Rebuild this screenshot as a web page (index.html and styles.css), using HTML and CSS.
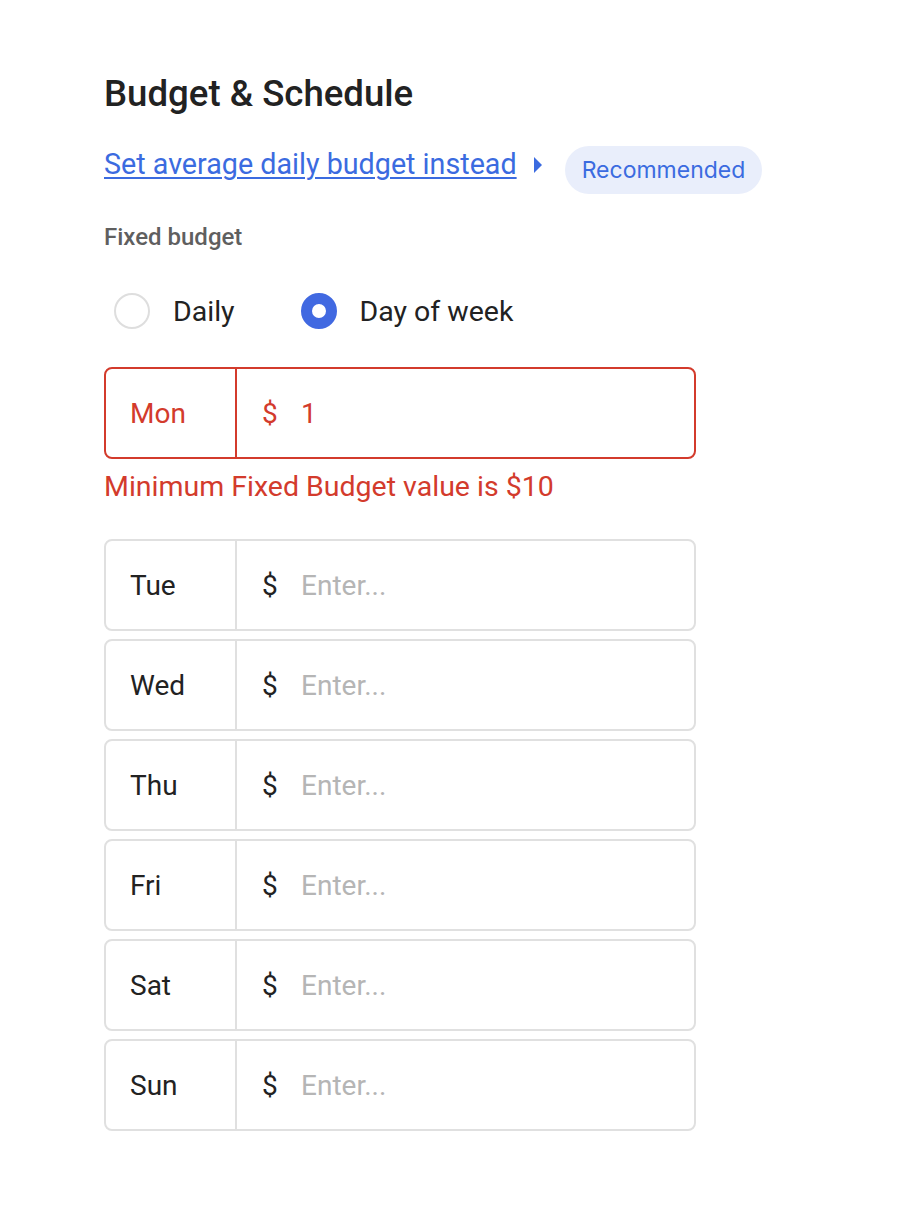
FILE: index.html
```html
<!DOCTYPE html>
<html lang="en">
<head>
<meta charset="utf-8">
<link rel="stylesheet" href="styles.css">
</head>
<body>
<main class="panel">
  <h1 class="title">Budget &amp; Schedule</h1>
  <div class="link-row">
    <a class="link" href="#">Set average daily budget instead</a>
    <span class="caret"></span>
    <span class="chip">Recommended</span>
  </div>
  <div class="label">Fixed budget</div>
  <div class="radios">
    <label class="radio"><span class="dot"></span><span>Daily</span></label>
    <label class="radio"><span class="dot on"></span><span>Day of week</span></label>
  </div>
  <div class="row error">
    <div class="day">Mon</div>
    <div class="amount"><span class="cur">$</span><span class="val">1</span></div>
  </div>
  <div class="err-msg">Minimum Fixed Budget value is $10</div>
  <div class="rows">
    <div class="row"><div class="day">Tue</div><div class="amount"><span class="cur">$</span><span class="ph">Enter...</span></div></div>
    <div class="row"><div class="day">Wed</div><div class="amount"><span class="cur">$</span><span class="ph">Enter...</span></div></div>
    <div class="row"><div class="day">Thu</div><div class="amount"><span class="cur">$</span><span class="ph">Enter...</span></div></div>
    <div class="row"><div class="day">Fri</div><div class="amount"><span class="cur">$</span><span class="ph">Enter...</span></div></div>
    <div class="row"><div class="day">Sat</div><div class="amount"><span class="cur">$</span><span class="ph">Enter...</span></div></div>
    <div class="row"><div class="day">Sun</div><div class="amount"><span class="cur">$</span><span class="ph">Enter...</span></div></div>
  </div>
</main>
</body>
</html>
```

FILE: styles.css
```css
* { box-sizing: border-box; }
html, body { margin: 0; padding: 0; background: #fff; }
body { font-family: Roboto, "Liberation Sans", sans-serif; color: #222; }
.panel { width: 592px; margin-left: 104px; padding-top: 72px; }
.title { margin: 0; font-size: 36.6px; line-height: 44px; font-weight: 500; color: #222; }
.link-row { display: flex; align-items: center; margin-top: 30px; height: 48px; white-space: nowrap; width: 720px; }
.link { font-size: 28.7px; color: #3b6be0; text-decoration: underline; text-underline-offset: 3px; text-decoration-thickness: 2px; line-height: 34px; flex: none; margin-bottom: 12px; }
.caret { flex: none; width: 0; height: 0; border-top: 8px solid transparent; border-bottom: 8px solid transparent; border-left: 8px solid #3b6be0; margin-left: 17px; margin-bottom: 10px; }
.chip { flex: none; margin-left: 23px; height: 48px; padding: 0 17px; border-radius: 24px; background: #e9eefb; color: #3b6be0; font-family: Inter, Roboto, sans-serif; font-size: 23px; display: flex; align-items: center; }
.label { margin-top: 28px; font-size: 24px; font-weight: 500; color: #5f5f5f; line-height: 30px; }
.radios { display: flex; gap: 66px; margin-top: 35px; padding-left: 10px; height: 48px; align-items: center; }
.radio { display: flex; align-items: center; gap: 23px; font-size: 28.5px; color: #222; }
.dot { width: 36px; height: 36px; border-radius: 50%; border: 2px solid #dedede; background: #fff; }
.dot.on { border: 11px solid #4169e1; }
.row { display: flex; height: 92px; border: 2px solid #e0e0e0; border-radius: 8px; font-size: 28px; }
.row.error { margin-top: 32px; border-color: #d33b2c; color: #d33b2c; }
.day { width: 131px; border-right: 2px solid #e0e0e0; display: flex; align-items: center; padding-left: 24px; }
.row.error .day { border-right-color: #d33b2c; }
.amount { flex: 1; display: flex; align-items: center; padding-left: 25px; }
.cur { width: 39px; }
.ph { color: #b5b5b5; }
.err-msg { color: #d33b2c; font-size: 28.5px; line-height: 40px; margin-top: 8px; }
.rows { display: flex; flex-direction: column; gap: 8px; margin-top: 32px; }
```
